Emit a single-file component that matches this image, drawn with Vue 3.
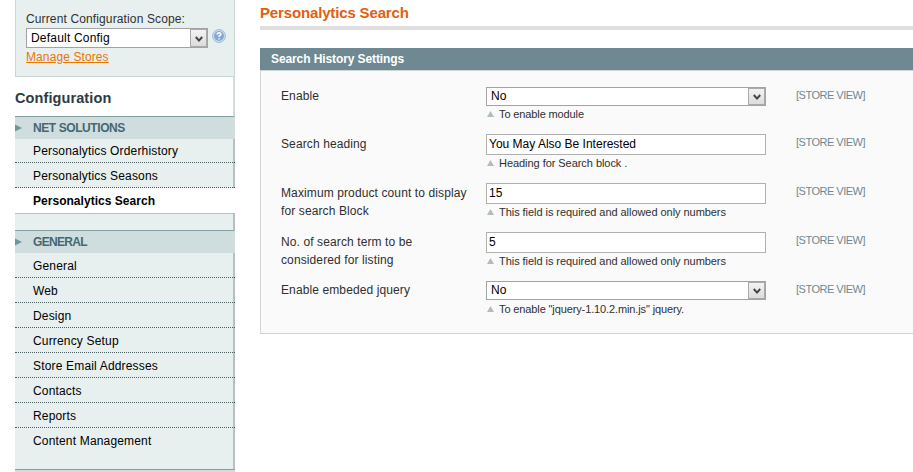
<script setup>
const groups = [
  { name: 'NET SOLUTIONS', cls: 'net', items: [
    { label: 'Personalytics Orderhistory' },
    { label: 'Personalytics Seasons' },
    { label: 'Personalytics Search', active: true },
  ] },
  { name: 'GENERAL', cls: 'general', items: [
    { label: 'General' }, { label: 'Web' }, { label: 'Design' }, { label: 'Currency Setup' },
    { label: 'Store Email Addresses' }, { label: 'Contacts' }, { label: 'Reports' }, { label: 'Content Management' },
  ] },
]
const fields = [
  { label: ['Enable'], type: 'select', value: 'No', note: 'To enable module' },
  { label: ['Search heading'], type: 'text', value: 'You May Also Be Interested', note: 'Heading for Search block .' },
  { label: ['Maximum product count to display', 'for search Block'], type: 'text', value: '15', note: 'This field is required and allowed only numbers' },
  { label: ['No. of search term to be', 'considered for listing'], type: 'text', value: '5', note: 'This field is required and allowed only numbers' },
  { label: ['Enable embeded jquery'], type: 'select', value: 'No', note: 'To enable "jquery-1.10.2.min.js" jquery.' },
]
</script>

<template>
  <div class="page">
    <aside class="side">
      <div class="scope">
        <div class="scope-label"><span>Current Configuration Scope:</span></div>
        <div class="scope-row">
          <div class="select scope-select">
            <span class="select-value">Default Config</span>
            <span class="arrow"><svg width="8" height="7" viewBox="0 0 8 7"><path d="M0.8 1 L4 4.6 L7.2 1" fill="none" stroke="#444" stroke-width="2" /></svg></span>
          </div>
          <svg class="help" width="14" height="14" viewBox="0 0 14 14">
            <circle cx="7" cy="7" r="6.4" fill="#d3e2f0" stroke="#9ab8d8" />
            <circle cx="7" cy="7" r="5" fill="#82a9d2" />
            <path d="M5.1 5.6 Q5.2 3.7 7.1 3.7 Q9 3.8 8.9 5.4 Q8.8 6.4 7.1 7.1 V8.1 M7.1 9.2 V10.6" fill="none" stroke="#fff" stroke-width="1.5" />
          </svg>
        </div>
        <a class="manage">Manage Stores</a>
      </div>
      <h3 class="heading"><span>Configuration</span></h3>
      <nav>
        <section v-for="g in groups" :key="g.name" class="group" :class="g.cls">
          <div class="group-title">
            <svg width="7" height="8" viewBox="0 0 7 8"><path d="M0 0.5 L7 4 L0 7.5Z" fill="#6f9598" /></svg>
            <span>{{ g.name }}</span>
          </div>
          <div v-for="i in g.items" :key="i.label" class="item" :class="{ active: i.active }"><span>{{ i.label }}</span></div>
        </section>
      </nav>
      <div class="next-group"></div>
    </aside>
    <main class="main">
      <h1 class="title"><span>Personalytics Search</span></h1>
      <div class="panel-head"><span>Search History Settings</span></div>
      <div class="panel">
        <div v-for="(f, n) in fields" :key="n" class="row" :class="'row-' + f.type">
          <div class="label"><div v-for="l in f.label" :key="l"><span>{{ l }}</span></div></div>
          <div class="control">
            <div v-if="f.type === 'select'" class="select">
              <span class="select-value">{{ f.value }}</span>
              <span class="arrow"><svg width="8" height="7" viewBox="0 0 8 7"><path d="M0.8 1 L4 4.6 L7.2 1" fill="none" stroke="#444" stroke-width="2" /></svg></span>
            </div>
            <div v-else class="input"><span>{{ f.value }}</span></div>
            <div class="note">
              <svg width="7" height="6" viewBox="0 0 7 6"><path d="M3.5 0 L7 6 H0Z" fill="#b3bcbc" /></svg>
              <span>{{ f.note }}</span>
            </div>
          </div>
          <div class="store"><span>[STORE VIEW]</span></div>
        </div>
      </div>
    </main>
  </div>
</template>

<style>
body { background: #fff; overflow: hidden; }
</style>
<style scoped>
.page, .page * { box-sizing: border-box; }
.page { display: flex; height: 472px; width: 913px; overflow: hidden; padding-left: 15px; font: 12px/18px "Liberation Sans", Arial, sans-serif; color: #2f2f2f; white-space: nowrap; }
.side { width: 220px; flex: none; }
.scope { height: 77px; background: #e7efef; border: 1px solid #cbd6d6; border-top: 0; padding: 10px 0 0 10px; }
.scope-label { height: 18px; letter-spacing: 0.13px; }
.scope-row { display: flex; gap: 4px; align-items: flex-start; }
.select { display: flex; justify-content: space-between; height: 19px; background: #fff; border: 1px solid #a3a3a3; color: #000; }
.select-value { line-height: 16px; padding-left: 4px; }
.scope-select { width: 182px; height: 20px; letter-spacing: 0.2px; }
.scope-select .select-value { line-height: 18px; }
.arrow { width: 17px; height: 100%; border: 1px solid #aaa; background: linear-gradient(#f3f3f3, #dcdcdc); display: flex; align-items: center; justify-content: center; padding-top: 2px; }
.help { margin-top: 1px; }
.manage { display: block; height: 18px; color: #ea7601; text-decoration: underline; letter-spacing: 0.1px; }
.heading { margin: 0; height: 39px; padding-top: 11px; font-size: 14.5px; letter-spacing: 0.1px; line-height: 20px; color: #2d3a3f; border-right: 2px solid #d3dada; }
.group { background: #e7efef; border-top: 1px solid #84a0a2; border-right: 2px solid #b3c1c2; }
.net { height: 114px; }
.general { height: 239px; }
.group-title { height: 22px; margin-right: -2px; background: #d0dddf; display: flex; align-items: center; gap: 11px; color: #44686f; font-weight: bold; letter-spacing: -0.42px; }
.general .group-title { letter-spacing: -0.7px; }
.item { height: 25px; line-height: 24px; padding: 1px 0 0 18px; color: #000; margin-right: -2px; border-bottom: 1px dotted #4c5d60; letter-spacing: 0.17px; }
.net .item:nth-child(2) { height: 24px; line-height: 23px; }
.general .item:last-child { border-bottom: 0; }
.net .active { background: #fff; font-weight: bold; border-bottom: 1px solid #b5c1c2; height: 26px; letter-spacing: 0.03px; }
.next-group { height: 3px; border-top: 1px solid #84a0a2; background: #d0dddf; }
.main { flex: 1; margin-left: 25px; min-width: 0; }
.title { margin: 0; height: 30px; border-bottom: 4px solid #dfdfdf; font-size: 15px; line-height: 26px; color: #e0600f; letter-spacing: -0.15px; }
.panel-head { margin-top: 18px; height: 22px; line-height: 22px; padding-left: 11px; background: #6f8992; color: #fff; font-weight: bold; letter-spacing: -0.1px; }
.panel { height: 264px; background: #fafafa; border: 1px solid #d0d4d4; border-right: 0; padding: 16px 0 0 20px; }
.row { display: flex; height: 49px; }
.row:first-child { height: 47px; }
.label { width: 205px; letter-spacing: 0.11px; }
.row-text .label { padding-top: 1px; }
.control { width: 280px; }
.input { height: 21px; border: 1px solid #b0b0b0; background: #fff; color: #000; padding-left: 2px; line-height: 19px; }
.note { display: flex; align-items: center; gap: 5px; height: 18px; margin-top: -1px; padding-left: 1px; font-size: 11px; letter-spacing: -0.05px; }
.row-select .note { letter-spacing: -0.12px; }
.row:last-child .note { margin-top: 0; }
.store { padding-left: 30px; font-size: 11px; line-height: 17px; color: #6f8992; letter-spacing: -0.5px; }
</style>
